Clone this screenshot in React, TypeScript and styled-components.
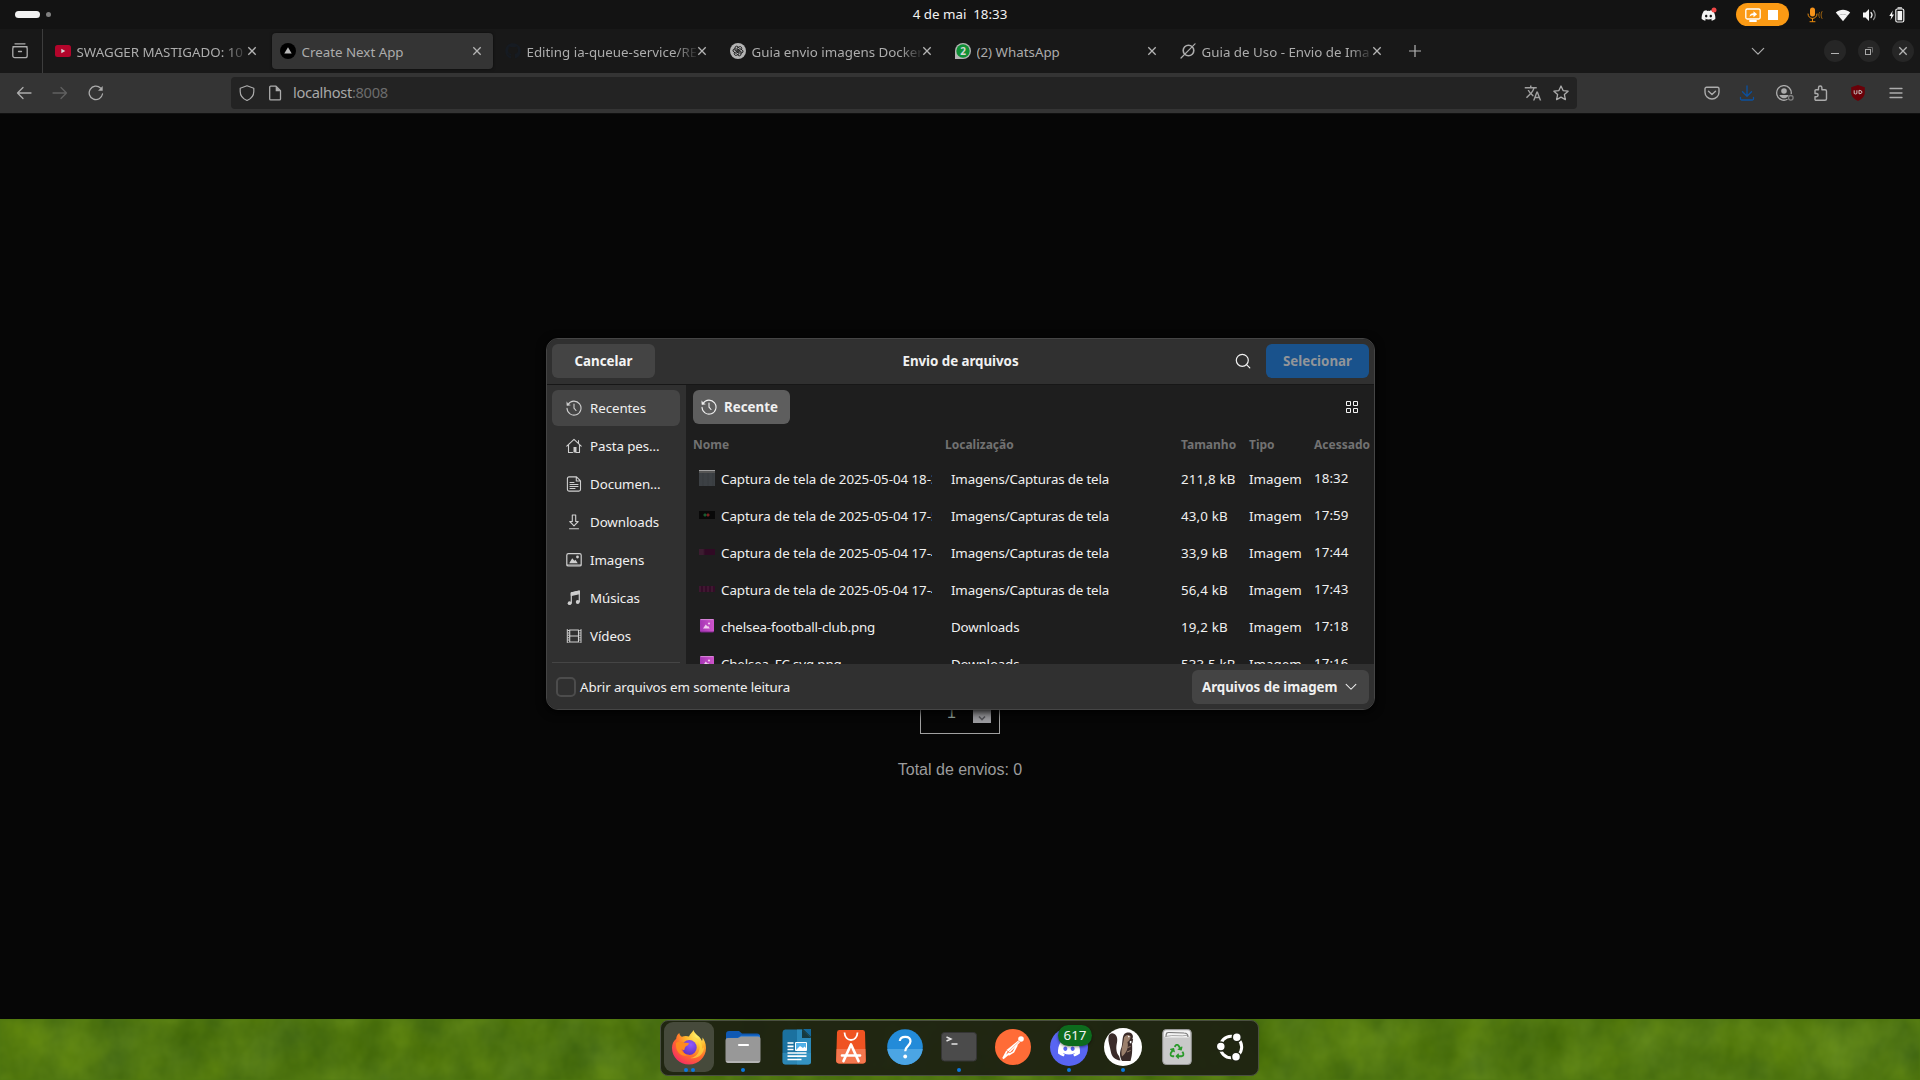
import React from "react";
import styled, { createGlobalStyle, css } from "styled-components";
import { FaDiscord, FaGithub, FaRecycle } from "react-icons/fa";
import { MdTranslate } from "react-icons/md";
import { TbBrandOpenai } from "react-icons/tb";

const Global = createGlobalStyle`
  * { box-sizing: border-box; }
  html, body { margin: 0; padding: 0; background: #060606; }
  body { overflow: hidden; font-family: "Noto Sans", sans-serif; }
  svg { display: block; flex: none; }
`;

const Screen = styled.div`
  width: 1920px;
  height: 1080px;
  position: relative;
  display: flex;
  flex-direction: column;
  overflow: hidden;
`;

/* ---------- System bar ---------- */
const SystemBar = styled.header`
  height: 29px;
  background: #131313;
  display: grid;
  grid-template-columns: 1fr auto 1fr;
  align-items: center;
  color: #f2f2f2;
`;
const Workspaces = styled.div`
  display: flex;
  align-items: center;
  gap: 6px;
  padding-left: 15px;
`;
const WorkspaceMark = styled.span<{ $active?: boolean }>`
  width: ${(p) => (p.$active ? 25 : 5)}px;
  height: ${(p) => (p.$active ? 7 : 5)}px;
  border-radius: 4px;
  background: ${(p) => (p.$active ? "#f2f2f2" : "#808080")};
`;
const Clock = styled.div`
  font-size: 13.33px;
  line-height: 20px;
  white-space: pre;
  padding-bottom: 1px;
`;
const Tray = styled.div`
  display: flex;
  align-items: center;
  justify-content: flex-end;
  padding-right: 15px;
`;
const TrayItem = styled.span<{ $ml: number }>`
  display: flex;
  margin-left: ${(p) => p.$ml}px;
`;
const SharePill = styled.span`
  width: 53px;
  height: 23px;
  margin-left: 19px;
  border-radius: 12px;
  background: #fb9a14;
  display: flex;
  align-items: center;
  justify-content: center;
  gap: 7px;
  padding-right: 2px;
`;
const StopSquare = styled.span`
  width: 10px;
  height: 10px;
  background: #fff;
`;

/* ---------- Tab strip ---------- */
const TabStrip = styled.div`
  height: 44px;
  background: #181818;
  display: flex;
  align-items: center;
  color: #acacac;
`;
const ViewButton = styled.div`
  width: 43px;
  height: 44px;
  border-right: 1px solid #3d3d3d;
  margin-right: 2px;
  padding: 0 0 0 12px;
  display: flex;
  align-items: center;
`;
const TabSlot = styled.div`
  width: 225px;
  padding: 0 2px;
`;
const TabBody = styled.div<{ $active?: boolean }>`
  height: 36px;
  border-radius: 4px;
  padding: 0 8px;
  display: flex;
  align-items: center;
  ${(p) => p.$active && css`background: #343434; box-shadow: 0 0 3px rgba(0, 0, 0, 0.6);`}
`;
const TabIcon = styled.span`
  width: 16px;
  height: 16px;
  margin-right: 6px;
  display: flex;
`;
const TabTitle = styled.span<{ $fade?: boolean }>`
  width: 169px;
  margin-right: 1px;
  margin-left: -0.5px;
  overflow: hidden;
  white-space: nowrap;
  font-size: 13.33px;
  line-height: 20px;
  padding-top: 1px;
  ${(p) => p.$fade && css`mask-image: linear-gradient(to right, #000 148px, transparent 172px);`}
`;
const CloseSlot = styled.span`
  width: 10px;
  display: flex;
`;
const NewTab = styled.span`
  margin-left: 13px;
  display: flex;
`;
const WindowControls = styled.div`
  margin-left: auto;
  display: flex;
  align-items: center;
  gap: 12px;
  padding-right: 6px;
`;
const ListTabs = styled.span`
  display: flex;
  margin-right: 47px;
`;
const RoundButton = styled.span`
  width: 22px;
  height: 22px;
  border-radius: 50%;
  background: #262626;
  display: flex;
  align-items: center;
  justify-content: center;
`;

/* ---------- Navigation bar ---------- */
const NavBar = styled.div`
  height: 40px;
  background: #343434;
  display: flex;
  align-items: center;
  color: #acacac;
`;
const NavButtons = styled.div`
  width: 231px;
  display: flex;
  gap: 20px;
  padding-left: 16px;
`;
const Address = styled.div`
  width: 1346px;
  height: 32px;
  border-radius: 4px;
  background: #232323;
  display: flex;
  align-items: center;
  padding: 0 8px;
`;
const AddressText = styled.span`
  margin-left: 10px;
  flex: 1;
  font-size: 14.67px;
  line-height: 22px;
  letter-spacing: -0.33px;
  padding-bottom: 2px;
  color: #a8a8a8;
  span { color: #6c6c6c; }
`;
const AddressIcon = styled.span<{ $ml?: number }>`
  display: flex;
  margin-left: ${(p) => p.$ml ?? 0}px;
`;
const Extensions = styled.div`
  margin-left: auto;
  display: flex;
  align-items: center;
  padding-right: 16px;
`;
const Extension = styled.span<{ $gap: number }>`
  display: flex;
  margin-right: ${(p) => p.$gap}px;
`;

/* ---------- Page ---------- */
const Page = styled.main`
  height: 906px;
  background: #060606;
  border-top: 1px solid #101010;
  display: flex;
  flex-direction: column;
  align-items: center;
  justify-content: flex-end;
  padding-bottom: 237px;
`;
const CountField = styled.div`
  width: 80px;
  height: 42px;
  border: 1px solid #a0a0a0;
  display: flex;
  align-items: center;
  justify-content: flex-end;
  gap: 17px;
  padding-right: 8px;
  color: #8fa09a;
  font: 16px "Liberation Sans", Arial, sans-serif;
`;
const Spinner = styled.span`
  width: 18px;
  height: 20px;
  background: #9a9a9e;
  display: flex;
  align-items: flex-end;
  justify-content: center;
`;
const Total = styled.p`
  margin: 24px 0 0;
  font: 16px/24px "Liberation Sans", Arial, sans-serif;
  color: #9c9c9c;
`;

/* ---------- File dialog ---------- */
const Dialog = styled.section`
  position: absolute;
  left: 546px;
  top: 338px;
  width: 829px;
  height: 372px;
  border: 1px solid #454545;
  border-radius: 12px;
  overflow: hidden;
  background: #1e1e1e;
  color: #f0f0f0;
  font-size: 13.33px;
  display: flex;
  flex-direction: column;
  box-shadow: 0 2px 10px #000;
`;
const DialogHeader = styled.div`
  height: 45px;
  flex: none;
  background: #303030;
  display: grid;
  grid-template-columns: 1fr auto 1fr;
  align-items: center;
  padding: 0 5px 1px;
  font-weight: 700;
  letter-spacing: -0.04px;
`;
const HeaderEnd = styled.div`
  display: flex;
  align-items: center;
  justify-content: flex-end;
  gap: 15px;
`;
const DialogButton = styled.button<{ $primary?: boolean }>`
  width: 103px;
  height: 34px;
  border: 0;
  border-radius: 6px;
  background: ${(p) => (p.$primary ? "#19528c" : "#444444")};
  color: ${(p) => (p.$primary ? "#929599" : "#f4f4f4")};
  font: 700 13.33px "Noto Sans", sans-serif;
  padding: 0;
`;
const DialogMain = styled.div`
  height: 280px;
  flex: none;
  display: flex;
  overflow: hidden;
  border-top: 1px solid #171717;
`;
const Sidebar = styled.nav`
  width: 139px;
  flex: none;
  background: #303030;
  padding: 5px 6px 0 5px;
  display: flex;
  flex-direction: column;
  gap: 2px;
`;
const Place = styled.div<{ $current?: boolean }>`
  height: 36px;
  flex: none;
  border-radius: 6px;
  background: ${(p) => (p.$current ? "#454545" : "transparent")};
  display: flex;
  align-items: center;
  gap: 8px;
  padding-left: 14px;
  letter-spacing: -0.08px;
  color: #f0f0f0;
  svg { color: #cfcfcf; }
`;
const SideRule = styled.div`
  height: 1px;
  flex: none;
  margin-top: 6px;
  background: #454545;
`;
const Listing = styled.div`
  flex: 1;
  min-width: 0;
  padding: 5px 0 0 7px;
`;
const PathRow = styled.div`
  height: 34px;
  display: flex;
  align-items: center;
  justify-content: space-between;
  padding-right: 16px;
`;
const PathButton = styled.div`
  width: 97px;
  height: 34px;
  border-radius: 6px;
  background: #5e5e5e;
  display: flex;
  align-items: center;
  gap: 7px;
  padding-left: 8px;
  font-weight: 700;
`;
const columns = css`
  display: grid;
  grid-template-columns: 252px 236px 68px 65px 60px;
  white-space: nowrap;
`;
const ColumnHeads = styled.div`
  ${columns}
  height: 36px;
  align-items: center;
  margin-top: 2px;
  margin-bottom: -2px;
  font-size: 12px;
  font-weight: 700;
  color: #727272;
`;
const FileRow = styled.div`
  ${columns}
  height: 37px;
  align-items: center;
`;
const NameCell = styled.div`
  display: flex;
  align-items: center;
  gap: 6px;
  padding-left: 6px;
`;
const FileName = styled.span<{ $tight?: boolean }>`
  width: 211px;
  overflow: hidden;
  letter-spacing: ${(p) => (p.$tight ? -0.16 : -0.03)}px;
`;
const PlaceCell = styled.span`
  padding-left: 6px;
  letter-spacing: -0.16px;
`;
const SizeCell = styled.span`
  letter-spacing: 0.15px;
`;
const TimeCell = styled.span`
  padding-bottom: 2px;
  letter-spacing: 0.1px;
`;
const Thumb = styled.span<{ $h: number; $bg: string }>`
  width: 16px;
  height: ${(p) => p.$h}px;
  flex: none;
  margin-bottom: 2px;
  background: ${(p) => p.$bg};
`;
const DialogFooter = styled.div`
  flex: 1;
  background: #303030;
  display: flex;
  align-items: center;
  padding: 0 5px 0 9px;
  letter-spacing: -0.12px;
`;
const Checkbox = styled.span`
  width: 20px;
  height: 20px;
  border: 2px solid #4c4c4c;
  border-radius: 5px;
  margin-right: 4px;
`;
const FilterButton = styled.div`
  width: 177px;
  height: 34px;
  margin-left: auto;
  border-radius: 6px;
  background: #444444;
  display: flex;
  align-items: center;
  justify-content: space-between;
  padding: 0 12px 0 10px;
  font-weight: 700;
  letter-spacing: -0.05px;
`;

/* ---------- Desktop strip & dock ---------- */
const Desktop = styled.footer`
  height: 61px;
  position: relative;
  background: #50780f;
  display: flex;
  justify-content: center;
`;
const Grass = styled.svg`
  position: absolute;
  inset: 0;
`;
const Dock = styled.div`
  position: relative;
  width: 599px;
  height: 56px;
  margin-top: 1px;
  margin-right: 1px;
  border: 1px solid #4a4f40;
  border-radius: 8px;
  background: rgba(29, 34, 18, 0.95);
  display: flex;
  align-items: center;
  padding: 0 0 2px 1px;
`;
const DockItem = styled.div<{ $active?: boolean }>`
  width: 50px;
  height: 50px;
  margin: 0 2px;
  flex: none;
  border-radius: 9px;
  position: relative;
  display: flex;
  align-items: center;
  justify-content: center;
  padding-bottom: 1px;
  background: ${(p) => (p.$active ? "#464a3b" : "transparent")};
`;
const DockRule = styled.span`
  width: 1px;
  height: 38px;
  margin: 0 1px;
  background: #565b4b;
`;
const Dots = styled.span`
  position: absolute;
  left: 0;
  right: 0;
  bottom: 0;
  display: flex;
  justify-content: center;
  gap: 3px;
`;
const Dot = styled.i`
  width: 4px;
  height: 4px;
  border-radius: 50%;
  background: #0a78e0;
`;
const Badge = styled.span`
  position: absolute;
  left: 14px;
  top: 3px;
  width: 34px;
  height: 21px;
  border-radius: 11px;
  background: #0d6b1d;
  color: #f4f4f4;
  font-size: 13.33px;
  line-height: 21px;
  text-align: center;
  box-shadow: 0 1px 3px rgba(0, 0, 0, 0.5);
`;

/* ---------- Icons ---------- */
type IconProps = { s?: number; w?: number; color?: string; children: React.ReactNode };
const Icon = ({ s = 16, w = 1.3, color = "currentColor", children }: IconProps) => (
  <svg width={s} height={s} viewBox="0 0 16 16" fill="none" stroke={color} strokeWidth={w} strokeLinecap="round" strokeLinejoin="round">
    {children}
  </svg>
);
const CloseIcon = () => (
  <svg width="10" height="10" viewBox="0 0 10 10" stroke="#b4b4b4" strokeWidth="1.3"><path d="M1.3 1.3l7.4 7.4M8.7 1.3L1.3 8.7" /></svg>
);
const ClockBack = () => (
  <Icon w={1.1}><path d="M2.2 4.2A7 7 0 1 1 1 8.3" /><path d="M8 4v4.2l2 2.3" /><path d="M.6 2.2l.3 3.5 3.3-.5z" fill="currentColor" strokeWidth=".3" /></Icon>
);
const HomeIcon = () => (
  <Icon w={1.1}><path d="M.8 8.2L8 1.3l7.2 6.9M2.5 7v7.5h4M13.5 7v7.5H10M12.5 2.5v3" /><path d="M7.5 9h3v5.5h-3z" fill="currentColor" stroke="none" /></Icon>
);
const DocIcon = () => (
  <Icon w={1.1}><path d="M3 .9h7.5l4 4v8.6a1.6 1.6 0 0 1-1.6 1.6H3a1.6 1.6 0 0 1-1.6-1.6v-11A1.6 1.6 0 0 1 3 .9zM10.3 1v4h4M4 6.5h4M4 8.5h8M4 10.5h8M4 12.5h5" /></Icon>
);
const DownIcon = () => (
  <Icon w={1.1}><path d="M6.3 1h3.4v6.5h2.5L8 11.8 3.8 7.5h2.5zM3.5 14.8h9" /></Icon>
);
const PictureIcon = () => (
  <Icon w={1.2}><rect x=".8" y="1.6" width="14.4" height="12.4" rx="1.6" /><path d="M1 13h14" /><path d="M3.2 11.2l3-5 2.2 2.6 1-1 2.4 3.4z" fill="currentColor" stroke="none" /><circle cx="11.5" cy="5" r="1.4" fill="currentColor" stroke="none" /></Icon>
);
const MusicIcon = () => (
  <Icon w={1.2}><path d="M5.3 13V3l8-1.8v10.5" /><path d="M5.3 2.8l8-1.8v2.6l-8 1.8z" fill="currentColor" /><circle cx="3.6" cy="13.2" r="1.9" fill="currentColor" stroke="none" /><circle cx="11.7" cy="12" r="1.9" fill="currentColor" stroke="none" /></Icon>
);
const FilmIcon = () => (
  <Icon w={1.1}><path d="M3.5 2h9M3.5 8h9M3.5 14h9M3.7 2v12M12.5 2v12" /><path d="M1.3 1.5v13M15 1.5v13" strokeWidth="1" /><path d="M2.4 2v12.5M14 2v12.5" strokeWidth="1.4" strokeDasharray="1 1.4" strokeLinecap="butt" /></Icon>
);
const FileThumb = styled.svg`
  margin-bottom: 2px;
`;
const ImageFile = () => (
  <FileThumb width="16" height="16" viewBox="0 0 16 16">
    <defs><linearGradient id="pinkFile" x1="0" x2="1"><stop stopColor="#a535b5" /><stop offset="1" stopColor="#cf55cb" /></linearGradient></defs>
    <rect x="1" y="1.5" width="14" height="13" rx="1.3" fill="#7b2489" /><rect x="1" y="1" width="14" height="12.5" rx="1.3" fill="url(#pinkFile)" /><path d="M1.5 1.6h13" stroke="#d888d8" />
    <path d="M4 10.5l2.8-4 1.6 2 .8-.6 1.6 2.6z" fill="#f2cdf0" /><circle cx="10" cy="5.5" r="1.1" fill="#f2cdf0" />
  </FileThumb>
);

const FirefoxLogo = () => (
  <svg width="36" height="36" viewBox="0 0 36 36">
    <defs>
      <radialGradient id="ffBody" cx=".75" cy=".15" r="1"><stop stopColor="#fff36b" /><stop offset=".35" stopColor="#ffb52b" /><stop offset=".65" stopColor="#ff6a2c" /><stop offset="1" stopColor="#f3206e" /></radialGradient>
      <radialGradient id="ffGlobe" cx=".6" cy=".3" r=".8"><stop stopColor="#9059ff" /><stop offset="1" stopColor="#5a2fb8" /></radialGradient>
    </defs>
    <path d="M22.5 1c-.8 2-3.500 3.500-4.500 6.500-2-.8-5-.8-7 .3C9.500 7.200 8.500 5.500 8.300 4 6 5.500 5.400 8 5.200 9.800 2.300 12 1 15.500 1 19c0 9.400 7.600 16.500 17 16.500S35 28.400 35 19c0-5-1.800-8.300-3.500-10.500 0 1.500 0 2.500-.5 3.500-2.200-5.500-7.500-6.500-8.500-11z" fill="url(#ffBody)" />
    <path d="M22 8c5.500 3 8 8.500 6 14-1.500 4-5 6.800-9 7 8 1.500 14-4 14-11-1 1-1 1.500-1.800 1.500C31.500 14 28 9 22 8z" fill="#ffd83d" opacity=".7" />
    <circle cx="18.300" cy="18.500" r="7.400" fill="url(#ffGlobe)" />
    <path d="M5 14c3-2 7-1 9-.2 2 .2 3.500 0 4 .8-.3 1.800-2.500 2.200-3.500 3.200-1.200 1-.4 3-1.800 3.500-1-.3-2-1-2.500-2 .3 4.500 4 7 8 6.500-8 3.500-14-3-13.200-11.800z" fill="#ff8a1e" />
  </svg>
);
const FilesLogo = () => (
  <svg width="36" height="34" viewBox="0 0 36 34">
    <path d="M1 4a3 3 0 0 1 3-3h10l3 2.500h15A3 3 0 0 1 35 6.500V14H1z" fill="#0f59b3" /><path d="M1 8l12-.3 3-2.200h19V12H1z" fill="#1b76dc" />
    <path d="M.5 10.500A2.500 2.500 0 0 1 3 8h10l3-1.500h17A2.500 2.500 0 0 1 35.500 9v21a3 3 0 0 1-3 3h-29a3 3 0 0 1-3-3z" fill="#989898" /><path d="M.7 31c.5 1.200 1.400 2 2.800 2h29c1.400 0 2.300-.8 2.800-2z" fill="#b4b4b4" /><path d="M14 15h9" stroke="#fff" strokeWidth="2.200" strokeLinecap="round" />
  </svg>
);
const WriterLogo = () => (
  <svg width="30" height="36" viewBox="0 0 30 36">
    <path d="M3 .5h17L29 9v23.500a3 3 0 0 1-3 3H3.500a3 3 0 0 1-3-3v-29A3 3 0 0 1 3 .5z" fill="#1b719f" /><path d="M15 .5h5L29 9v23.500a3 3 0 0 1-3 3H15z" fill="#3092c2" opacity=".75" /><path d="M.5 24h28.500v8.500a3 3 0 0 1-3 3H3.500a3 3 0 0 1-3-3z" fill="#3d9ecb" opacity=".5" />
    <path d="M21 0h8v8z" fill="#15699a" /><path d="M20 .5V9h9z" fill="#163a40" />
    <path d="M5.500 14h6M5.500 17.300h6M5.500 20.500h6M5.500 24h19M5.500 27.200h19M5.500 30.500h14" stroke="#fff" strokeWidth="1.700" /><rect x="13" y="13" width="12" height="9" rx="1" fill="#fff" /><rect x="14" y="14" width="10" height="7" fill="#4fb0e8" /><path d="M14 21l4-4 3 2 1.500-1.500L24 19v2z" fill="#fff" />
  </svg>
);
const StoreLogo = () => (
  <svg width="30" height="36" viewBox="0 0 30 36">
    <path d="M3.500 1h23a2.500 2.500 0 0 1 2.500 2.300l.8 28.200a3 3 0 0 1-3 3H3.200a3 3 0 0 1-3-3L1 3.300A2.500 2.500 0 0 1 3.500 1z" fill="#ef5322" /><path d="M.6 20h28.800l.3 11.500a3 3 0 0 1-3 3H3.200a3 3 0 0 1-3-3z" fill="#f4774e" />
    <path d="M8.500 3.500c.5 10 12.500 10 13 0" fill="none" stroke="#fff" strokeWidth="1.800" /><path d="M7.500 32L15 15.500 22.500 32M6 26.500h18" fill="none" stroke="#fff" strokeWidth="2.700" strokeLinecap="round" strokeLinejoin="round" />
  </svg>
);
const HelpLogo = () => (
  <svg width="36" height="36" viewBox="0 0 36 36"><circle cx="18" cy="18" r="17.800" fill="#238bd9" /><path d="M.3 20a17.800 17.800 0 0 0 35.400 0z" fill="#4ba5e4" /><path d="M12.800 12c.3-3 2.500-4.200 5.500-4.200 3.200 0 5.200 1.800 5.200 4.500 0 4.500-5.300 4.700-5.300 10" fill="none" stroke="#fff" strokeWidth="2.200" /><circle cx="18.200" cy="27.500" r="1.900" fill="#fff" /></svg>
);
const TerminalLogo = () => (
  <svg width="36" height="30" viewBox="0 0 36 30"><rect x=".5" y=".5" width="35" height="28.500" rx="3" fill="#4b4b4b" stroke="#353535" /><path d="M5.500 5l4.500 2-4.500 2M10.500 12h6" fill="none" stroke="#e6e6e6" strokeWidth="1.400" /></svg>
);
const PostmanLogo = () => (
  <svg width="36" height="36" viewBox="0 0 36 36"><circle cx="18" cy="18" r="18" fill="#ff6c37" /><path d="M23.300 11.500L11.500 21l3.500 2.500L25 13.300z" fill="#fff" /><path d="M12 22l-4 7.500 6.500-5.500M22 16l-3.500 7-5 3" fill="none" stroke="#fff" strokeWidth="1.700" /><circle cx="26" cy="10" r="2.800" fill="#fff" /><path d="M24.500 12L13 23" stroke="#ff6c37" strokeWidth=".5" /></svg>
);
const DiscordTile = () => (
  <svg width="38" height="38" viewBox="0 0 38 38"><circle cx="19" cy="19" r="19" fill="#5865f2" /><g transform="translate(7 8)" color="#fff"><FaDiscord size={24} /></g></svg>
);
const BeaverLogo = () => (
  <svg width="38" height="38" viewBox="0 0 38 38">
    <circle cx="19" cy="19" r="19" fill="#fff" />
    <path d="M4.500 9C5 5.500 8 4.500 10.500 6c2.800 2 3.300 5.500 2.300 9.500-1 4.500-.5 9.500 2.200 12.500l1.500 4.500C11 32 7.500 28.500 6.800 23.500 6 18.500 3.800 13.500 4.500 9z" fill="#3a2b29" />
    <path d="M20 6.500c2-2.500 6-2.500 8-.5 1.500 1.800 1 4-.2 6 .5 6.500 1 14-1.300 21h-8.500c-2.500-4-2.500-9-.7-13C18.700 16 18 9.500 20 6.500z" fill="#3a2b29" />
    <path d="M20 9.500c1.500-3 4.500-3.300 6.500-1.300.3 2.500-1.200 4.500-3 5.800 1.200 5-.5 10.500-5.500 14.500-1.800-7 1.500-11.500 2-19z" fill="#9b806c" />
    <path d="M27.300 10.500l1.800.7-.7 4-1.400-1z" fill="#3a2b29" /><path d="M25.800 12.800l1.800.4-.4 2.300-1.400-.5z" fill="#fff" /><circle cx="24.800" cy="8.600" r=".8" fill="#fff" />
    <path d="M23.500 19.500l3-1M23 24l3.500-1.500" stroke="#9b806c" strokeWidth="1" />
  </svg>
);
const TrashLogo = () => (
  <svg width="30" height="36" viewBox="0 0 30 36"><rect x=".7" y=".5" width="28.600" height="35" rx="3.500" fill="#c9c9c9" stroke="#999" /><rect x="2" y="1.500" width="26" height="7" rx="2" fill="#f3f3f3" /><path d="M4 8c0-5 1.500-4.500 3-4.500l15 .5c3 0 4 1 4 4" fill="none" stroke="#777" strokeWidth="1.200" /><path d="M5 7.300c6-2 14 .6 20-1" fill="none" stroke="#aaa" /><g transform="translate(7.500 15)" color="#2b9a2b"><FaRecycle size={15} /></g></svg>
);
const UbuntuLogo = () => (
  <svg width="30" height="30" viewBox="0 0 30 30" fill="none" stroke="#fff"><circle cx="15" cy="15" r="10.700" strokeWidth="3" /><g fill="#fff" stroke="#1f2414" strokeWidth="1.500"><circle cx="4.800" cy="14.500" r="4.500" /><circle cx="20.800" cy="5.300" r="4.500" /><circle cx="20" cy="24.800" r="4.500" /></g></svg>
);

/* ---------- Data ---------- */
const tabs = [
  { title: "SWAGGER MASTIGADO: 10", fade: true, icon: <svg width="16" height="16" viewBox="0 0 16 16"><rect y="2" width="16" height="12" rx="2.500" fill="#b3052b" /><path d="M6.300 5.800v4.400L10.300 8z" fill="#d8d8d8" /></svg> },
  { title: "Create Next App", active: true, icon: <svg width="16" height="16" viewBox="0 0 16 16"><circle cx="8" cy="8" r="8" fill="#000" /><path d="M8 4.300l3.700 6.300H4.300z" fill="#b8b8b8" /></svg> },
  { title: "Editing ia-queue-service/RE", fade: true, icon: <FaGithub size={16} color="#161b22" /> },
  { title: "Guia envio imagens Docker", fade: true, icon: <svg width="16" height="16" viewBox="0 0 16 16"><circle cx="8" cy="8" r="8" fill="#b4b4b4" /><g transform="translate(2 2)" color="#1c1c1c"><TbBrandOpenai size={12} /></g></svg> },
  { title: "(2) WhatsApp", icon: <svg width="16" height="16" viewBox="0 0 16 16"><path d="M0 16V8a8 8 0 1 1 8 8z" fill="#b5b5b5" /><circle cx="8" cy="8" r="6.700" fill="#0f8f35" /><text x="8" y="11.600" textAnchor="middle" fontSize="10" fontWeight="700" fontFamily="Noto Sans" fill="#d5d5d5">2</text></svg> },
  { title: "Guia de Uso - Envio de Ima", fade: true, icon: <Icon w={1.600}><circle cx="8.500" cy="7.500" r="5.300" /><path d="M1 15L15 .8" strokeWidth="1.200" /></Icon> },
];
const places: [string, () => React.ReactElement][] = [
  ["Recentes", ClockBack], ["Pasta pes...", HomeIcon], ["Documen...", DocIcon], ["Downloads", DownIcon],
  ["Imagens", PictureIcon], ["Músicas", MusicIcon], ["Vídeos", FilmIcon],
];
const shots = [
  { h: 16, bg: "linear-gradient(#a0a0a0 0 1px, #555 1px 3px, rgba(60,64,68,.8) 3px), repeating-linear-gradient(90deg, #3c4044 0 3px, #2e3234 3px 5px)" },
  { h: 8, bg: "radial-gradient(circle at 6px 4px, #185c30 0 1px, transparent 2px), radial-gradient(circle at 9px 4px, #7a2020 0 1px, transparent 2px), #090909" },
  { h: 6, bg: "linear-gradient(90deg, #3c1c30 0 4px, #300a24 6px)" },
  { h: 6, bg: "repeating-linear-gradient(90deg, #3f1831 0 2px, #330c27 2px 4px)" },
];
const files = [
  ["Captura de tela de 2025-05-04 18-3", "Imagens/Capturas de tela", "211,8 kB", "18:32"],
  ["Captura de tela de 2025-05-04 17-5", "Imagens/Capturas de tela", "43,0 kB", "17:59"],
  ["Captura de tela de 2025-05-04 17-4", "Imagens/Capturas de tela", "33,9 kB", "17:44"],
  ["Captura de tela de 2025-05-04 17-4", "Imagens/Capturas de tela", "56,4 kB", "17:43"],
  ["chelsea-football-club.png", "Downloads", "19,2 kB", "17:18"],
  ["Chelsea_FC.svg.png", "Downloads", "533,5 kB", "17:16"],
];
const apps: { logo: React.ReactElement; dots?: number; active?: boolean; badge?: string; rule?: boolean }[] = [
  { logo: <FirefoxLogo />, dots: 2, active: true }, { logo: <FilesLogo />, dots: 1 }, { logo: <WriterLogo /> }, { logo: <StoreLogo /> },
  { logo: <HelpLogo /> }, { logo: <TerminalLogo />, dots: 1 }, { logo: <PostmanLogo /> },
  { logo: <DiscordTile />, dots: 1, badge: "617", rule: true }, { logo: <BeaverLogo />, dots: 1 }, { logo: <TrashLogo /> }, { logo: <UbuntuLogo /> },
];

export default function App() {
  return (
    <Screen>
      <Global />
      <SystemBar>
        <Workspaces><WorkspaceMark $active /><WorkspaceMark /></Workspaces>
        <Clock>{"4 de mai  18:33"}</Clock>
        <Tray>
          <TrayItem $ml={0}>
            <svg width="16" height="16" viewBox="0 0 16 16" color="#f4f4f4"><g transform="translate(0 1)"><FaDiscord size={15} /></g><circle cx="13" cy="3" r="2.500" fill="#f04747" /></svg>
          </TrayItem>
          <SharePill>
            <Icon color="#fff" w={1.300}><rect x=".8" y="2" width="14.400" height="10" rx="1.500" /><path d="M5 14h6" strokeWidth="1.800" /><path d="M4.500 9.800c.3-2.500 1.700-3.500 4-3.500V4.200l3.600 3-3.600 3V8.200c-1.700 0-3 .3-4 1.600z" fill="#fff" stroke="none" /></Icon>
            <StopSquare />
          </SharePill>
          <TrayItem $ml={18}>
            <Icon color="#e8890c" w={1.300}><rect x="3" y=".5" width="5" height="9" rx="2.500" fill="#f7931a" stroke="none" /><path d="M1 7c0 6 9 6 9 0M5.500 11.500v3M3 14.700h5" strokeWidth="1" /><path d="M12.500 5.500c-1 1.700-1 3.300 0 5M15 4.500c-1.300 2.200-1.300 4.800 0 7" strokeWidth="1" stroke="#9a6010" /></Icon>
          </TrayItem>
          <TrayItem $ml={12}>
            <Icon w={1}><path d="M.8 5.500C5 1.800 11 1.800 15.200 5.500L12.500 8.700C10 6.700 6 6.700 3.500 8.700z" fill="#f4f4f4" stroke="none" /><path d="M3.500 8.700C6 6.700 10 6.700 12.500 8.700L8 14.200z" fill="#f4f4f4" stroke="none" /></Icon>
          </TrayItem>
          <TrayItem $ml={11}>
            <Icon w={1.200}><path d="M1 5.500h2.500L7 2v12l-3.500-3.500H1z" fill="#f4f4f4" stroke="none" /><path d="M9 5.500c1.300 1.500 1.300 3.500 0 5" /><path d="M11.500 3.500c2.300 2.500 2.300 6.500 0 9" stroke="#8a8a8a" /></Icon>
          </TrayItem>
          <TrayItem $ml={11}>
            <Icon w={1.200}><path d="M3.800 3.500L.3 9h2l-.8 4L5 7.500H3z" fill="#f4f4f4" stroke="none" /><rect x="6.800" y="2" width="8" height="13" rx="1.500" /><path d="M9 .9h3.500" /><rect x="8.500" y="4" width="4.600" height="9.300" fill="#f4f4f4" stroke="none" /></Icon>
          </TrayItem>
        </Tray>
      </SystemBar>

      <TabStrip>
        <ViewButton>
          <Icon w={1.300}><path d="M3 .8h10" /><rect x=".8" y="3.700" width="14.400" height="11" rx="2" /><path d="M1 3.700h14M6.500 8.500h3" /></Icon>
        </ViewButton>
        {tabs.map((t) => (
          <TabSlot key={t.title}>
            <TabBody $active={t.active}>
              <TabIcon>{t.icon}</TabIcon>
              <TabTitle $fade={t.fade}>{t.title}</TabTitle>
              <CloseSlot><CloseIcon /></CloseSlot>
            </TabBody>
          </TabSlot>
        ))}
        <NewTab><svg width="14" height="14" viewBox="0 0 14 14" stroke="#b4b4b4" strokeWidth="1.200"><path d="M7 1v12M1 7h12" /></svg></NewTab>
        <WindowControls>
          <ListTabs><Icon s={14} w={1.400}><path d="M1.500 5L8 11.500 14.500 5" /></Icon></ListTabs>
          <RoundButton><svg width="10" height="10" stroke="#b4b4b4"><path d="M1 7.500h8" /></svg></RoundButton>
          <RoundButton><svg width="10" height="10" fill="none" stroke="#a8a8a8"><rect x="1.500" y="3.500" width="5" height="5" /><path d="M3.500 1.500h5v5" stroke="#686868" /></svg></RoundButton>
          <RoundButton><CloseIcon /></RoundButton>
        </WindowControls>
      </TabStrip>

      <NavBar>
        <NavButtons>
          <Icon><path d="M15 8H1.500M7 2.500L1.500 8 7 13.500" /></Icon>
          <Icon color="#606060"><path d="M1 8h13.500M9 2.500L14.500 8 9 13.500" /></Icon>
          <Icon><path d="M14.500 9A6.700 6.700 0 1 1 12.500 3" /><path d="M14.700 1v4.800H10z" fill="currentColor" stroke="none" /></Icon>
        </NavButtons>
        <Address>
          <Icon w={1.200}><path d="M8 .8l6.800 2.400v3.300c0 4-2.600 7.200-6.800 9-4.200-1.800-6.800-5-6.800-9V3.200z" /></Icon>
          <AddressIcon $ml={12}><Icon w={1.300}><path d="M3.700 1.200h5.300l4.500 4.500v8.200a1 1 0 0 1-1 1H3.700a1 1 0 0 1-1-1V2.200a1 1 0 0 1 1-1z" /><path d="M8.700 1.200v5h5z" fill="currentColor" stroke="none" /></Icon></AddressIcon>
          <AddressText>localhost<span>:8008</span></AddressText>
          <AddressIcon><MdTranslate size={18} color="#a0a0a0" /></AddressIcon>
          <AddressIcon $ml={11}><Icon w={1.300}><path d="M8 1l2.100 4.600 5 .6-3.700 3.400 1 5L8 12.100l-4.400 2.500 1-5L.9 6.200l5-.6z" /></Icon></AddressIcon>
        </Address>
        <Extensions>
          <Extension $gap={19}><Icon w={1.400}><path d="M2.500 2.200h11a1.500 1.500 0 0 1 1.500 1.500v3.500a7 6.800 0 0 1-14 0V3.700a1.500 1.500 0 0 1 1.500-1.500zM4.500 6.300L8 9.500l3.500-3.200" /></Icon></Extension>
          <Extension $gap={21}><Icon w={1.300} color="#0b509e"><path d="M8 .8v10M3.500 6.800L8 11.200l4.500-4.400M1.500 12.500v1.300a1.200 1.200 0 0 0 1.200 1.200h10.600a1.200 1.200 0 0 0 1.200-1.200v-1.300" /></Icon></Extension>
          <Extension $gap={19}><svg width="18" height="16" viewBox="0 0 18 16" fill="none" stroke="#acacac"><path d="M11.500 14.300A7.300 7.300 0 1 1 15.200 9" strokeWidth="1.300" /><circle cx="8" cy="6" r="2.800" fill="#acacac" stroke="none" /><path d="M3.300 10h9.400c-1 2.500-3 3.300-4.700 3.300S4.200 12.500 3.300 10z" fill="#acacac" stroke="none" /><circle cx="14.800" cy="12.800" r="2.300" stroke="#808080" strokeWidth="1.300" /></svg></Extension>
          <Extension $gap={21}><Icon w={1.400}><path d="M5.500 4.700V2.700a1.700 1.700 0 0 1 3.400 0v2H12a1.500 1.500 0 0 1 1.500 1.500v7.500a1.500 1.500 0 0 1-1.500 1.500H3a1 1 0 0 1-1-1v-2.500h1.500a1.500 1.500 0 0 0 0-3.200H2V5.700a1 1 0 0 1 1-1z" /></Icon></Extension>
          <Extension $gap={22}><svg width="16" height="16" viewBox="0 0 16 16"><path d="M8 0l6.800 2.200v5.300c0 4-3 6.500-6.800 8.500C4.200 14 1.200 11.500 1.200 7.500V2.200z" fill="#6a0008" /><path d="M4.200 5.300v3.200q1.500 1 2.700 0V5.300M9 5.300v3.500q3 0 3-1.700T9 5.300z" fill="none" stroke="#c9c0c0" strokeWidth="1" /></svg></Extension>
          <Icon><path d="M2 3.500h12M2 8h12M2 12.500h12" /></Icon>
        </Extensions>
      </NavBar>

      <Page>
        <CountField>
          1
          <Spinner><svg width="10" height="8" viewBox="0 0 10 8" fill="none" stroke="#55555a" strokeWidth="1.600"><path d="M2 1.500l3 3 3-3" /></svg></Spinner>
        </CountField>
        <Total>Total de envios: 0</Total>
      </Page>

      <Desktop>
        <Grass width="1920" height="61">
          <filter id="blades" x="0" y="0" width="100%" height="100%" colorInterpolationFilters="sRGB">
            <feTurbulence type="fractalNoise" baseFrequency="0.022 0.018" numOctaves="4" seed="8" />
            <feColorMatrix values="0.2 0 0 0 0.215  0.2 0 0 0 0.365  0.06 0 0.08 0 -0.005  0 0 0 0 1" />
            <feGaussianBlur stdDeviation="1.200" edgeMode="duplicate" />
          </filter>
          <rect width="1920" height="61" filter="url(#blades)" />
        </Grass>
        <Dock>
          {apps.map((a, i) => (
            <React.Fragment key={i}>
              {a.rule && <DockRule />}
              <DockItem $active={a.active}>
                {a.logo}
                {a.badge && <Badge>{a.badge}</Badge>}
                {a.dots && <Dots>{Array.from({ length: a.dots }, (_, k) => <Dot key={k} />)}</Dots>}
              </DockItem>
            </React.Fragment>
          ))}
        </Dock>
      </Desktop>

      <Dialog>
        <DialogHeader>
          <DialogButton>Cancelar</DialogButton>
          <span>Envio de arquivos</span>
          <HeaderEnd>
            <Icon w={1.200}><circle cx="7.300" cy="7.300" r="6" /><path d="M11.800 11.800l3 3" /></Icon>
            <DialogButton $primary>Selecionar</DialogButton>
          </HeaderEnd>
        </DialogHeader>
        <DialogMain>
          <Sidebar>
            {places.map(([label, PlaceIcon], i) => (
              <Place key={label} $current={i === 0}><PlaceIcon />{label}</Place>
            ))}
            <SideRule />
          </Sidebar>
          <Listing>
            <PathRow>
              <PathButton><ClockBack />Recente</PathButton>
              <svg width="12" height="12" fill="none" stroke="#f4f4f4"><path d="M.5.5h4v4h-4zM7.500.5h4v4h-4zM.5 7.500h4v4h-4zM7.500 7.500h4v4h-4z" /></svg>
            </PathRow>
            <ColumnHeads><span>Nome</span><span>Localização</span><span>Tamanho</span><span>Tipo</span><span>Acessado</span></ColumnHeads>
            {files.map(([name, place, size, time], i) => (
              <FileRow key={time}>
                <NameCell>
                  {shots[i] ? <Thumb $h={shots[i].h} $bg={shots[i].bg} /> : <ImageFile />}
                  <FileName $tight={!shots[i]}>{name}</FileName>
                </NameCell>
                <PlaceCell>{place}</PlaceCell>
                <SizeCell>{size}</SizeCell>
                <span>Imagem</span>
                <TimeCell>{time}</TimeCell>
              </FileRow>
            ))}
          </Listing>
        </DialogMain>
        <DialogFooter>
          <Checkbox />
          Abrir arquivos em somente leitura
          <FilterButton>Arquivos de imagem<Icon s={12} w={1.400}><path d="M1.500 4.500L8 11l6.500-6.500" /></Icon></FilterButton>
        </DialogFooter>
      </Dialog>
    </Screen>
  );
}
